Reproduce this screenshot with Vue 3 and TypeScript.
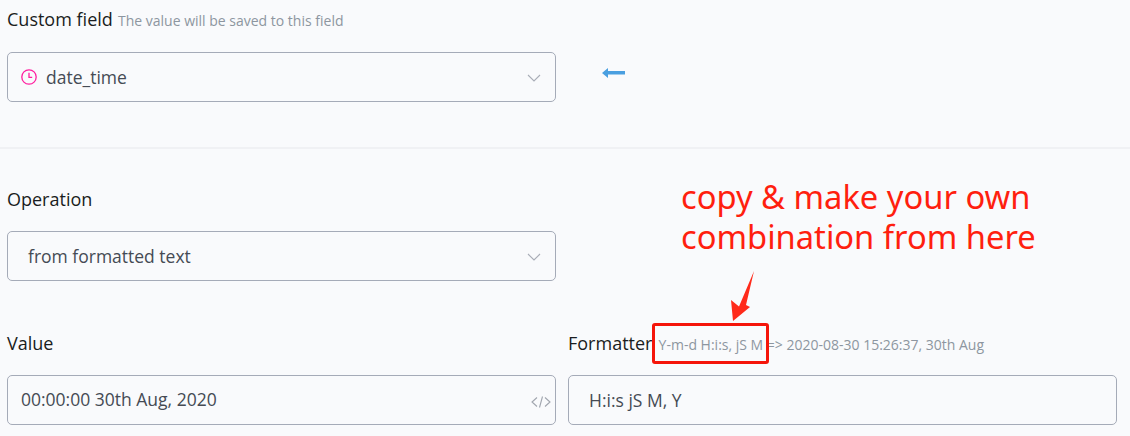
<script setup lang="ts">
const note: string[] = ['copy & make your own', 'combination from here']
</script>

<template>
  <div class="page">
    <section class="top">
      <div class="label-row"><span class="label">Custom field</span> <span class="hint">The value will be saved to this field</span></div>
      <div class="field-row">
        <div class="box select half">
          <svg class="clock" width="16" height="16" viewBox="0 0 16 16" fill="none" stroke="#ff1fa0" stroke-width="1.3">
            <circle cx="8" cy="8" r="7.2" />
            <path d="M8 3.8V8.4H11.2" />
          </svg>
          <span class="value">date_time</span>
          <svg class="chev" width="14" height="8" viewBox="0 0 14 8" fill="none" stroke="#a9adb7" stroke-width="1.1"><path d="M1 1l6 6 6-6" /></svg>
        </div>
        <svg class="back" width="23" height="10" viewBox="0 0 23 10"><path d="M0 5L6 0V3H23V6.6H6V10Z" fill="#4a9fe0" /></svg>
      </div>
    </section>
    <div class="divider"></div>
    <section class="op">
      <div class="label-row"><span class="label">Operation</span></div>
      <div class="box select half pad-wide">
        <span class="value">from formatted text</span>
        <svg class="chev" width="14" height="8" viewBox="0 0 14 8" fill="none" stroke="#a9adb7" stroke-width="1.1"><path d="M1 1l6 6 6-6" /></svg>
      </div>
    </section>
    <section class="cols">
      <div>
        <div class="label-row"><span class="label">Value</span></div>
        <div class="box pad-mid">
          <span class="value">00:00:00 30th Aug, 2020</span>
          <svg class="code" width="20" height="12" viewBox="0 0 20 12" fill="none" stroke="#a0a5ae" stroke-width="1.1"><path d="M6 1.5L1 6l5 4.5M14 1.5L19 6l-5 4.5M11.5 0.5L8.5 11.5" /></svg>
        </div>
      </div>
      <div>
        <div class="label-row"><span class="label">Formatter</span> <span class="hint fmt">Y-m-d H:i:s, jS M =&gt; 2020-08-30 15:26:37, 30th Aug</span></div>
        <div class="box pad-wide"><span class="value">H:i:s jS M, Y</span></div>
      </div>
    </section>

    <div class="note"><div v-for="line in note" :key="line">{{ line }}</div></div>
    <svg class="arrow" width="26" height="52" viewBox="0 0 26 52"><path d="M25 1L17 35L21 37L4 51L2 30L10 36.5Z" fill="#ff2a1a" /></svg>
    <div class="mark"></div>
  </div>
</template>

<style>
html, body { margin: 0; background: #f9fafc; }
</style>

<style scoped>
.page {
  position: relative;
  width: 1130px;
  height: 436px;
  overflow: hidden;
  box-sizing: border-box;
  font-family: "Open Sans", "Noto Sans", sans-serif;
  background: #f9fafc;
  padding: 7px 13px 0 7px;
}
.label-row { height: 24px; line-height: 24px; white-space: nowrap; }
.label { font-size: 18px; color: #1a1d21; }
.hint { font-size: 14px; color: #8d96a0; margin-left: 1px; }
.hint.fmt { margin-left: 2px; }
.field-row { display: flex; align-items: center; margin-top: 21px; }
.half { width: 549px; flex: none; }
.box {
  box-sizing: border-box;
  height: 50px;
  border: 1px solid #a5abb8;
  border-radius: 5px;
  display: flex;
  align-items: center;
  padding: 0 13px;
  position: relative;
}
.pad-wide { padding-left: 20px; }
.pad-mid { padding-left: 13px; padding-bottom: 2px; }
.value { font-size: 17.5px; color: #454b54; }
.clock { margin-right: 9px; flex: none; }
.chev { position: absolute; right: 14px; top: 21px; }
.back { margin-left: 46px; margin-top: -8px; flex: none; }
.divider { height: 2px; background: #f0f1f4; margin: 45px -13px 0 -7px; }
.op { margin-top: 38px; }
.op .select { margin-top: 20px; }
.cols { display: grid; grid-template-columns: 549px 549px; column-gap: 12px; margin-top: 50px; }
.cols .box { margin-top: 20px; }
.code { position: absolute; right: 4px; top: 20px; }
.note {
  position: absolute;
  left: 681px;
  top: 177px;
  font-family: "Noto Sans", sans-serif;
  font-size: 32.7px;
  line-height: 40px;
  color: #ff1f0f;
  white-space: nowrap;
}
.arrow { position: absolute; left: 729px; top: 270px; }
.mark {
  position: absolute;
  left: 652px;
  top: 323px;
  width: 117px;
  height: 41px;
  box-sizing: border-box;
  border: 3px solid #f5150a;
  border-radius: 3px;
}
</style>
